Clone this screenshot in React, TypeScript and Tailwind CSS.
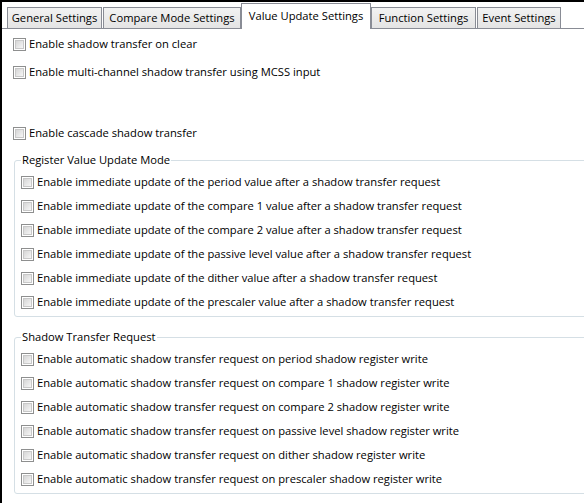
import React from "react";

const tabs = [
  { label: "General Settings", width: "w-[95px]", gap: "mr-px" },
  { label: "Compare Mode Settings", width: "w-[138px]", gap: "" },
  { label: "Value Update Settings", width: "w-[130px]", gap: "", active: true },
  { label: "Function Settings", width: "w-[105px]", gap: "mr-px" },
  { label: "Event Settings", width: "w-[84px]", gap: "" },
];

const updateModes = [
  "Enable immediate update of the period value after a shadow transfer request",
  "Enable immediate update of the compare 1 value after a shadow transfer request",
  "Enable immediate update of the compare 2 value after a shadow transfer request",
  "Enable immediate update of the passive level value after a shadow transfer request",
  "Enable immediate update of the dither value after a shadow transfer request",
  "Enable immediate update of the prescaler value after a shadow transfer request",
];

const transferRequests = [
  "Enable automatic shadow transfer request on period shadow register write",
  "Enable automatic shadow transfer request on compare 1 shadow register write",
  "Enable automatic shadow transfer request on compare 2 shadow register write",
  "Enable automatic shadow transfer request on passive level shadow register write",
  "Enable automatic shadow transfer request on dither shadow register write",
  "Enable automatic shadow transfer request on prescaler shadow register write",
];

const CheckRow = ({ label, className = "" }: { label: string; className?: string }) => (
  <label className={`flex h-4 items-center gap-[3px] ${className}`}>
    <span className="size-[13px] shrink-0 border border-[#8e8f8f] bg-white p-px">
      <span className="block size-full border border-[#c8c8c8] bg-gradient-to-br from-[#d6d6d6] to-[#f6f6f6]" />
    </span>
    <span className="whitespace-nowrap">{label}</span>
  </label>
);

const Group = ({ title, items, className = "" }: { title: string; items: string[]; className?: string }) => (
  <fieldset className={`w-[580px] rounded-[3px] border border-[#d5dfe5] pl-[6px] pb-[6px] ${className}`}>
    <legend className="h-4 px-px leading-4">{title}</legend>
    <div className="mt-[6px] flex flex-col gap-2">
      {items.map((item) => (
        <CheckRow key={item} label={item} />
      ))}
    </div>
  </fieldset>
);

export default function App() {
  return (
    <div className="h-[503px] w-[584px] overflow-hidden border-l-2 border-t-2 border-black bg-white font-['Open_Sans',sans-serif] text-[11.2px] leading-4 text-black">
      <div className="flex h-[27px] items-end border-b border-[#898c95] pl-[5px]">
        {tabs.map((tab) =>
          tab.active ? (
            <div
              key={tab.label}
              className={`relative z-10 -mb-px flex h-[26px] items-start justify-center border border-b-0 border-[#898c95] bg-white pt-[4px] ${tab.width} ${tab.gap}`}
            >
              {tab.label}
            </div>
          ) : (
            <div
              key={tab.label}
              className={`flex h-[21px] items-center justify-center border border-b-0 border-[#898c95] bg-gradient-to-b from-[#f2f2f2] to-[#e4e4e4] ${tab.width} ${tab.gap}`}
            >
              {tab.label}
            </div>
          )
        )}
      </div>

      <div className="pl-[11px] pt-[7px]">
        <CheckRow label="Enable shadow transfer on clear" />
        <CheckRow label="Enable multi-channel shadow transfer using MCSS input" className="mt-3" />
        <CheckRow label="Enable cascade shadow transfer" className="mt-[45px]" />

        <Group title="Register Value Update Mode" items={updateModes} className="ml-px mt-[11px]" />
        <Group title="Shadow Transfer Request" items={transferRequests} className="ml-px mt-[12px]" />
      </div>
    </div>
  );
}
